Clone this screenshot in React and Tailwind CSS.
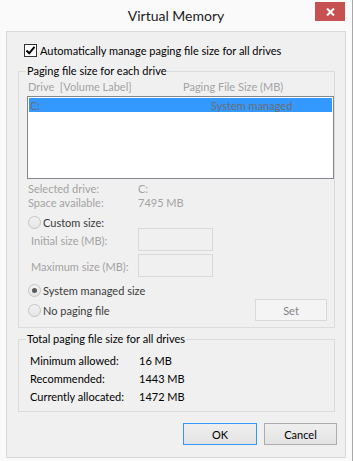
import React, { useState } from 'react';

function CheckBox({ checked }) {
    return (
        <span className="w-[13px] h-[13px] border border-[#333333] bg-white flex items-center justify-center shrink-0">
            {checked && (
                <svg width="11" height="11" viewBox="0 0 11 11">
                    <path d="M1.5 5.5 L4.2 8.3 L9.5 1.8" fill="none" stroke="#000" strokeWidth="2" />
                </svg>
            )}
        </span>
    );
}

function Radio({ checked }) {
    return (
        <span className="w-[13px] h-[13px] rounded-full border border-[#c4c4c4] bg-gradient-to-b from-[#f2f2f2] to-[#e6e6e6] flex items-center justify-center shrink-0">
            {checked && <span className="w-[5px] h-[5px] rounded-full bg-[#5a5a5a]"></span>}
        </span>
    );
}

function App() {
    const [auto] = useState(true);
    const totals = [
        ['Minimum allowed:', '16 MB'],
        ['Recommended:', '1443 MB'],
        ['Currently allocated:', '1472 MB'],
    ];

    return (
        <div className="w-[353px] h-[461px] bg-[#fafafa] border-r border-[#a8a8a8] flex flex-col text-[11px] text-black overflow-hidden whitespace-nowrap" style={{ fontFamily: 'Lato, "Noto Sans", sans-serif' }}>
            <div className="h-[31px] relative flex items-center justify-center shrink-0">
                <span className="text-[14px] text-[#1a1a1a] leading-none">Virtual Memory</span>
                <button className="absolute top-[2px] right-[7px] w-[30px] h-[19px] bg-[#c75050] flex items-center justify-center">
                    <svg width="9" height="8" viewBox="0 0 9 8">
                        <path d="M1 0.5 L8 7.5 M8 0.5 L1 7.5" stroke="#fff" strokeWidth="2" />
                    </svg>
                </button>
            </div>

            <div className="ml-[6px] w-[340px] h-[427px] bg-[#f0f0f0] border border-[#d9d9d9] flex flex-col">
                <div className="mt-[12px] ml-[17px] h-[13px] flex items-center gap-[3px]">
                    <CheckBox checked={auto} />
                    <span className="leading-none">Automatically manage paging file size for all drives</span>
                </div>

                <fieldset className="mt-[6px] ml-[11px] w-[317px] border border-[#dcdcdc] pb-[6px]">
                    <legend className="ml-[7px] px-[1px] leading-[16px]">Paging file size for each drive</legend>
                    <div className="pl-[9px] h-[16px] leading-[16px] text-[#a3a3a3] flex">
                        <span className="w-[155px] whitespace-pre">Drive  [Volume Label]</span>
                        <span>Paging File Size (MB)</span>
                    </div>
                    <div className="mt-[1px] ml-[8px] w-[307px] h-[83px] bg-white border border-[#828790] pt-[1px] px-[1px]">
                        <div className="h-[14px] bg-[#3399ff] flex items-center text-[#6d6d6d] leading-none">
                            <span className="pl-[1px] w-[182px]">C:</span>
                            <span>System managed</span>
                        </div>
                    </div>
                    <div className="mt-[3px] pl-[9px] text-[#a3a3a3] leading-[14px]">
                        <div className="flex"><span className="w-[110px]">Selected drive:</span><span>C:</span></div>
                        <div className="flex"><span className="w-[110px]">Space available:</span><span>7495 MB</span></div>
                    </div>
                    <div className="mt-[6px] ml-[9px] h-[12px] flex items-center gap-[2px] text-[#3a3a3a]">
                        <Radio checked={false} />
                        <span className="leading-none">Custom size:</span>
                    </div>
                    <div className="pl-[12px] h-[23px] flex items-center text-[#a3a3a3]">
                        <span className="w-[107px] pt-[3px]">Initial size (MB):</span>
                        <span className="w-[75px] h-[23px] border border-[#d9d9d9] bg-[#f0f0f0]"></span>
                    </div>
                    <div className="mt-[3px] pl-[12px] h-[23px] flex items-center text-[#a3a3a3]">
                        <span className="w-[107px] pt-[3px]">Maximum size (MB):</span>
                        <span className="w-[75px] h-[23px] border border-[#d9d9d9] bg-[#f0f0f0]"></span>
                    </div>
                    <div className="mt-[7px] ml-[9px] h-[12px] flex items-center gap-[2px] text-[#3a3a3a]">
                        <Radio checked={true} />
                        <span className="leading-none">System managed size</span>
                    </div>
                    <div className="mt-[3px] ml-[9px] mr-[7px] h-[22px] flex items-center justify-between text-[#3a3a3a]">
                        <div className="flex items-center gap-[2px]">
                            <Radio checked={false} />
                            <span className="leading-none">No paging file</span>
                        </div>
                        <button className="w-[72px] h-[22px] border border-[#d9d9d9] bg-[#f4f4f4] text-[#838383] leading-none">Set</button>
                    </div>
                </fieldset>

                <fieldset className="mt-[3px] ml-[11px] w-[317px] border border-[#dcdcdc] pt-[5px] pb-[5px]">
                    <legend className="ml-[7px] px-[1px] leading-[16px]">Total paging file size for all drives</legend>
                    {totals.map(([label, value]) => (
                        <div key={label} className="pl-[11px] h-[18px] flex items-center">
                            <span className="w-[109px]">{label}</span>
                            <span>{value}</span>
                        </div>
                    ))}
                </fieldset>

                <div className="mt-[11px] pr-[8px] flex justify-end gap-[7px]">
                    <button className="w-[74px] h-[22px] border border-[#3399ff] bg-gradient-to-b from-[#efefef] to-[#e3e3e3] leading-none">OK</button>
                    <button className="w-[73px] h-[22px] border border-[#acacac] bg-gradient-to-b from-[#efefef] to-[#e3e3e3] leading-none">Cancel</button>
                </div>
            </div>
        </div>
    );
}

export default App;
